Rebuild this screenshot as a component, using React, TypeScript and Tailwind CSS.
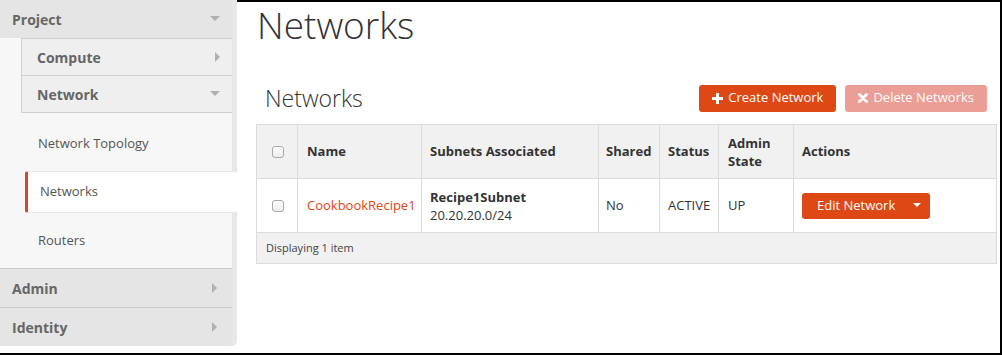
import React from "react";

function CaretDown({ className = "" }: { className?: string }) {
  return (
    <svg width="10" height="6" viewBox="0 0 10 6" className={className}>
      <polygon points="0,0 10,0 5,5" fill="currentColor" />
    </svg>
  );
}

function CaretRight({ className = "" }: { className?: string }) {
  return (
    <svg width="6" height="10" viewBox="0 0 6 10" className={className}>
      <polygon points="0,0 5,5 0,10" fill="currentColor" />
    </svg>
  );
}

function Checkbox() {
  return (
    <span className="block w-[12px] h-[12px] rounded-[3px] border border-[#a9a9a9] bg-gradient-to-b from-white to-[#ececec]" />
  );
}

function Sidebar() {
  return (
    <div className="w-[237px] shrink-0 flex flex-col self-start bg-[#e8e8e8] pr-[5px] rounded-br-[5px] h-[346px]">
      {/* Project */}
      <div className="h-[38px] bg-[#e5e5e5] flex items-center justify-between pl-[12px] pr-[12px] text-[14px] font-bold text-[#666]">
        <span>Project</span>
        <CaretDown className="text-[#b0b0b0]" />
      </div>
      <div className="bg-[#f7f7f7] pl-[21px]">
        <div className="h-[38px] bg-[#efefef] border-l border-t border-b border-[#cfcfcf] flex items-center justify-between pl-[15px] pr-[11px] text-[14px] font-bold text-[#666]">
          <span>Compute</span>
          <CaretRight className="text-[#b0b0b0]" />
        </div>
        <div className="h-[37px] bg-[#efefef] border-l border-b border-[#cfcfcf] flex items-center justify-between pl-[15px] pr-[12px] text-[14px] font-bold text-[#666]">
          <span>Network</span>
          <CaretDown className="text-[#b0b0b0]" />
        </div>
      </div>
      <div className="bg-[#f7f7f7] text-[13px] text-[#555] flex flex-col">
        <div className="h-[58px] flex items-center pl-[38px] pt-[3px]">Network Topology</div>
        <div className="h-[42px] flex items-center ml-[25px] -mr-[5px] bg-white border-l-[3px] border-[#d8472a] rounded-l-[3px] border-y border-y-[#e6e6e6] pl-[12px]">
          Networks
        </div>
        <div className="h-[55px] flex items-center pl-[38px]">Routers</div>
      </div>
      <div className="h-[39px] bg-[#e5e5e5] border-t border-[#cbcbcb] flex items-center justify-between pl-[12px] pr-[14px] text-[14px] font-bold text-[#666]">
        <span>Admin</span>
        <CaretRight className="text-[#b0b0b0]" />
      </div>
      <div className="h-[39px] bg-[#e5e5e5] border-t border-[#cbcbcb] flex items-center justify-between pl-[12px] pr-[14px] text-[14px] font-bold text-[#666] rounded-br-[4px]">
        <span>Identity</span>
        <CaretRight className="text-[#b0b0b0]" />
      </div>
    </div>
  );
}

export default function App() {
  return (
    <div
      className="w-[1002px] h-[355px] flex bg-white border-r-2 border-b-2 border-black overflow-hidden"
      style={{ fontFamily: '"Open Sans", "Noto Sans", sans-serif' }}
    >
      <Sidebar />
      <div className="flex-1 border-t-2 border-black pl-[19px] pr-[3px] flex flex-col">
        <h1 className="text-[37px] leading-[50px] font-light text-[#333] pl-[1px] -mt-[2px]">Networks</h1>

        <div className="mt-[33px] flex items-center justify-between pl-[9px] pr-[10px] h-[30px]">
          <h2 className="text-[23px] font-light text-[#333]">Networks</h2>
          <div className="flex gap-[9px]">
            <button className="h-[27px] px-[13px] rounded-[3px] bg-[#dd4814] text-white text-[13px] flex items-center gap-[5px]">
              <svg width="11" height="11" viewBox="0 0 11 11">
                <path d="M4 0h3v4h4v3H7v4H4V7H0V4h4z" fill="white" />
              </svg>
              Create Network
            </button>
            <button className="h-[27px] px-[13px] rounded-[3px] bg-[#eb9e96] text-white text-[13px] flex items-center gap-[5px]">
              <svg width="10" height="10" viewBox="0 0 10 10">
                <path d="M1.5 1.5l7 7M8.5 1.5l-7 7" stroke="white" strokeWidth="2.8" strokeLinecap="round" />
              </svg>
              Delete Networks
            </button>
          </div>
        </div>

        <table className="mt-[11px] w-[741px] border border-[#dcdcdc] border-collapse text-[13px] text-[#333] table-fixed">
          <colgroup>
            <col className="w-[41px]" />
            <col className="w-[124px]" />
            <col className="w-[177px]" />
            <col className="w-[61px]" />
            <col className="w-[59px]" />
            <col className="w-[75px]" />
            <col />
          </colgroup>
          <thead>
            <tr className="h-[54px] bg-[#f1f1f1] font-bold text-left">
              <th className="border border-[#dcdcdc] pl-[15px]"><Checkbox /></th>
              <th className="border border-[#dcdcdc] pl-[9px]">Name</th>
              <th className="border border-[#dcdcdc] pl-[8px]">Subnets Associated</th>
              <th className="border border-[#dcdcdc] pl-[7px]">Shared</th>
              <th className="border border-[#dcdcdc] pl-[8px]">Status</th>
              <th className="border border-[#dcdcdc] pl-[9px] leading-[18px]">Admin<br />State</th>
              <th className="border border-[#dcdcdc] pl-[8px]">Actions</th>
            </tr>
          </thead>
          <tbody>
            <tr className="h-[54px] bg-white">
              <td className="border border-[#dcdcdc] pl-[15px]"><Checkbox /></td>
              <td className="border border-[#dcdcdc] pl-[9px] text-[#dd4814]">CookbookRecipe1</td>
              <td className="border border-[#dcdcdc] pl-[8px] leading-[18px]">
                <div className="font-bold">Recipe1Subnet</div>
                <div>20.20.20.0/24</div>
              </td>
              <td className="border border-[#dcdcdc] pl-[7px]">No</td>
              <td className="border border-[#dcdcdc] pl-[8px]">ACTIVE</td>
              <td className="border border-[#dcdcdc] pl-[9px]">UP</td>
              <td className="border border-[#dcdcdc] pl-[8px]">
                <div className="w-[128px] h-[26px] rounded-[3px] bg-[#dd4814] text-white flex items-center justify-between pl-[15px] pr-[9px]">
                  <span>Edit Network</span>
                  <svg width="8" height="5" viewBox="0 0 8 5">
                    <polygon points="0,0 8,0 4,4" fill="white" />
                  </svg>
                </div>
              </td>
            </tr>
            <tr className="h-[31px] bg-[#f1f1f1]">
              <td colSpan={7} className="border border-[#dcdcdc] pl-[9px] text-[11px] text-[#444]">
                Displaying 1 item
              </td>
            </tr>
          </tbody>
        </table>
      </div>
    </div>
  );
}
